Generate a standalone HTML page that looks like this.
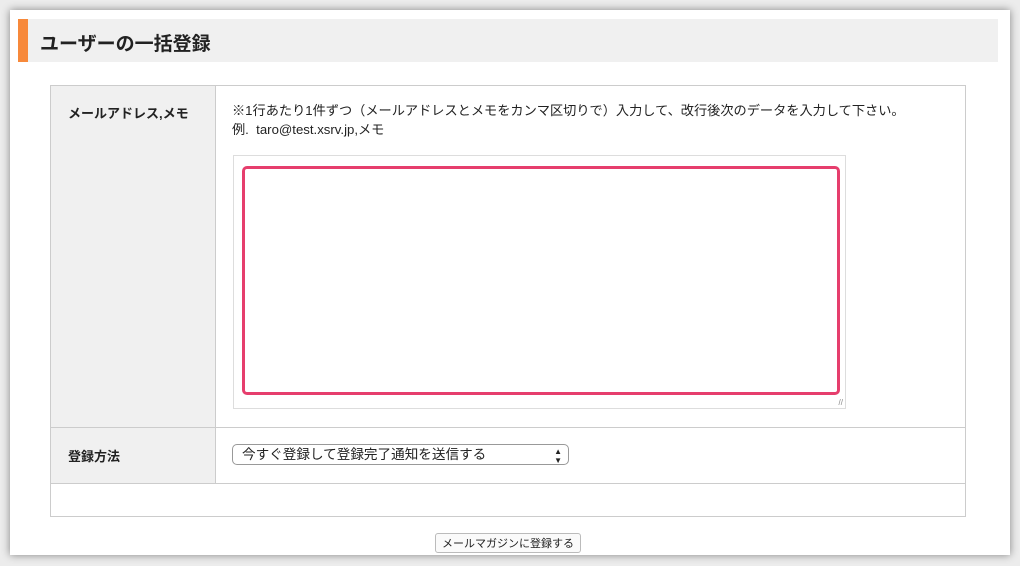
<!DOCTYPE html>
<html><head><meta charset="utf-8"><style>
body{margin:0;width:1020px;height:566px;background:#ececec;font-family:"Liberation Sans","Noto Sans CJK JP",sans-serif;position:relative;overflow:hidden;color:#222}
.panel{position:absolute;left:10px;top:10px;width:1000px;height:545px;background:#fff;box-shadow:0 0 8px rgba(0,0,0,.45)}
.hdr{position:absolute;left:18px;top:19px;width:980px;height:43px;background:#f0f0f0}
.hdr .bar{position:absolute;left:0;top:0;width:10px;height:43px;background:#f7893b}
.hdr h1{position:absolute;left:22px;top:10px;margin:0;font-size:19px;font-weight:bold;color:#222}
.tbl{position:absolute;left:50px;top:85px;width:914px;height:430px;border:1px solid #ccc}
.lc{position:absolute;left:0;width:164px;background:#f0f0f0;border-right:1px solid #ccc}
.hl{position:absolute;left:0;width:914px;border-top:1px solid #ccc}
.lbl{position:absolute;left:17px;font-size:13px;font-weight:bold}
.txt{position:absolute;left:181px;font-size:13.2px;line-height:19px}
.ta{position:absolute;left:182px;top:69px;width:611px;height:252px;border:1px solid #ddd;background:#fff}
.pink{position:absolute;left:8px;top:10px;width:592px;height:223px;border:3px solid #e63e6d;border-radius:5px}
.sel{position:absolute;left:181px;top:358px;border:1px solid #999;border-radius:5px;font-size:13.6px;line-height:19px;padding-left:9px;box-sizing:border-box;width:337px;height:21px}
.btn{position:absolute;left:435px;top:533px;width:146px;height:20px;border:1px solid #bbb;border-radius:3px;background:#fafafa;font-size:11px;text-align:center;line-height:20px;box-sizing:border-box}
</style></head><body>
<div class="panel"></div>
<div class="hdr"><div class="bar"></div><h1>ユーザーの一括登録</h1></div>
<div class="tbl">
 <div class="lc" style="top:0;height:341px"></div>
 <div class="lc" style="top:342px;height:55px"></div>
 <div class="hl" style="top:341px"></div>
 <div class="hl" style="top:397px"></div>
 <div class="lbl" style="top:17px">メールアドレス,メモ</div>
 <div class="lbl" style="top:360px">登録方法</div>
 <div class="txt" style="top:15px">※1行あたり1件ずつ（メールアドレスとメモをカンマ区切りで）入力して、改行後次のデータを入力して下さい。<br>例.&nbsp; taro@test.xsrv.jp,メモ</div>
 <div class="ta"><div class="pink"></div><div style="position:absolute;right:2px;bottom:1px;font-size:8px;color:#888">//</div></div>
 <div class="sel">今すぐ登録して登録完了通知を送信する<span style="position:absolute;right:6px;top:0;font-size:8px;line-height:9px;padding-top:2px">▲<br>▼</span></div>
</div>
<div class="btn">メールマガジンに登録する</div>
</body></html>
